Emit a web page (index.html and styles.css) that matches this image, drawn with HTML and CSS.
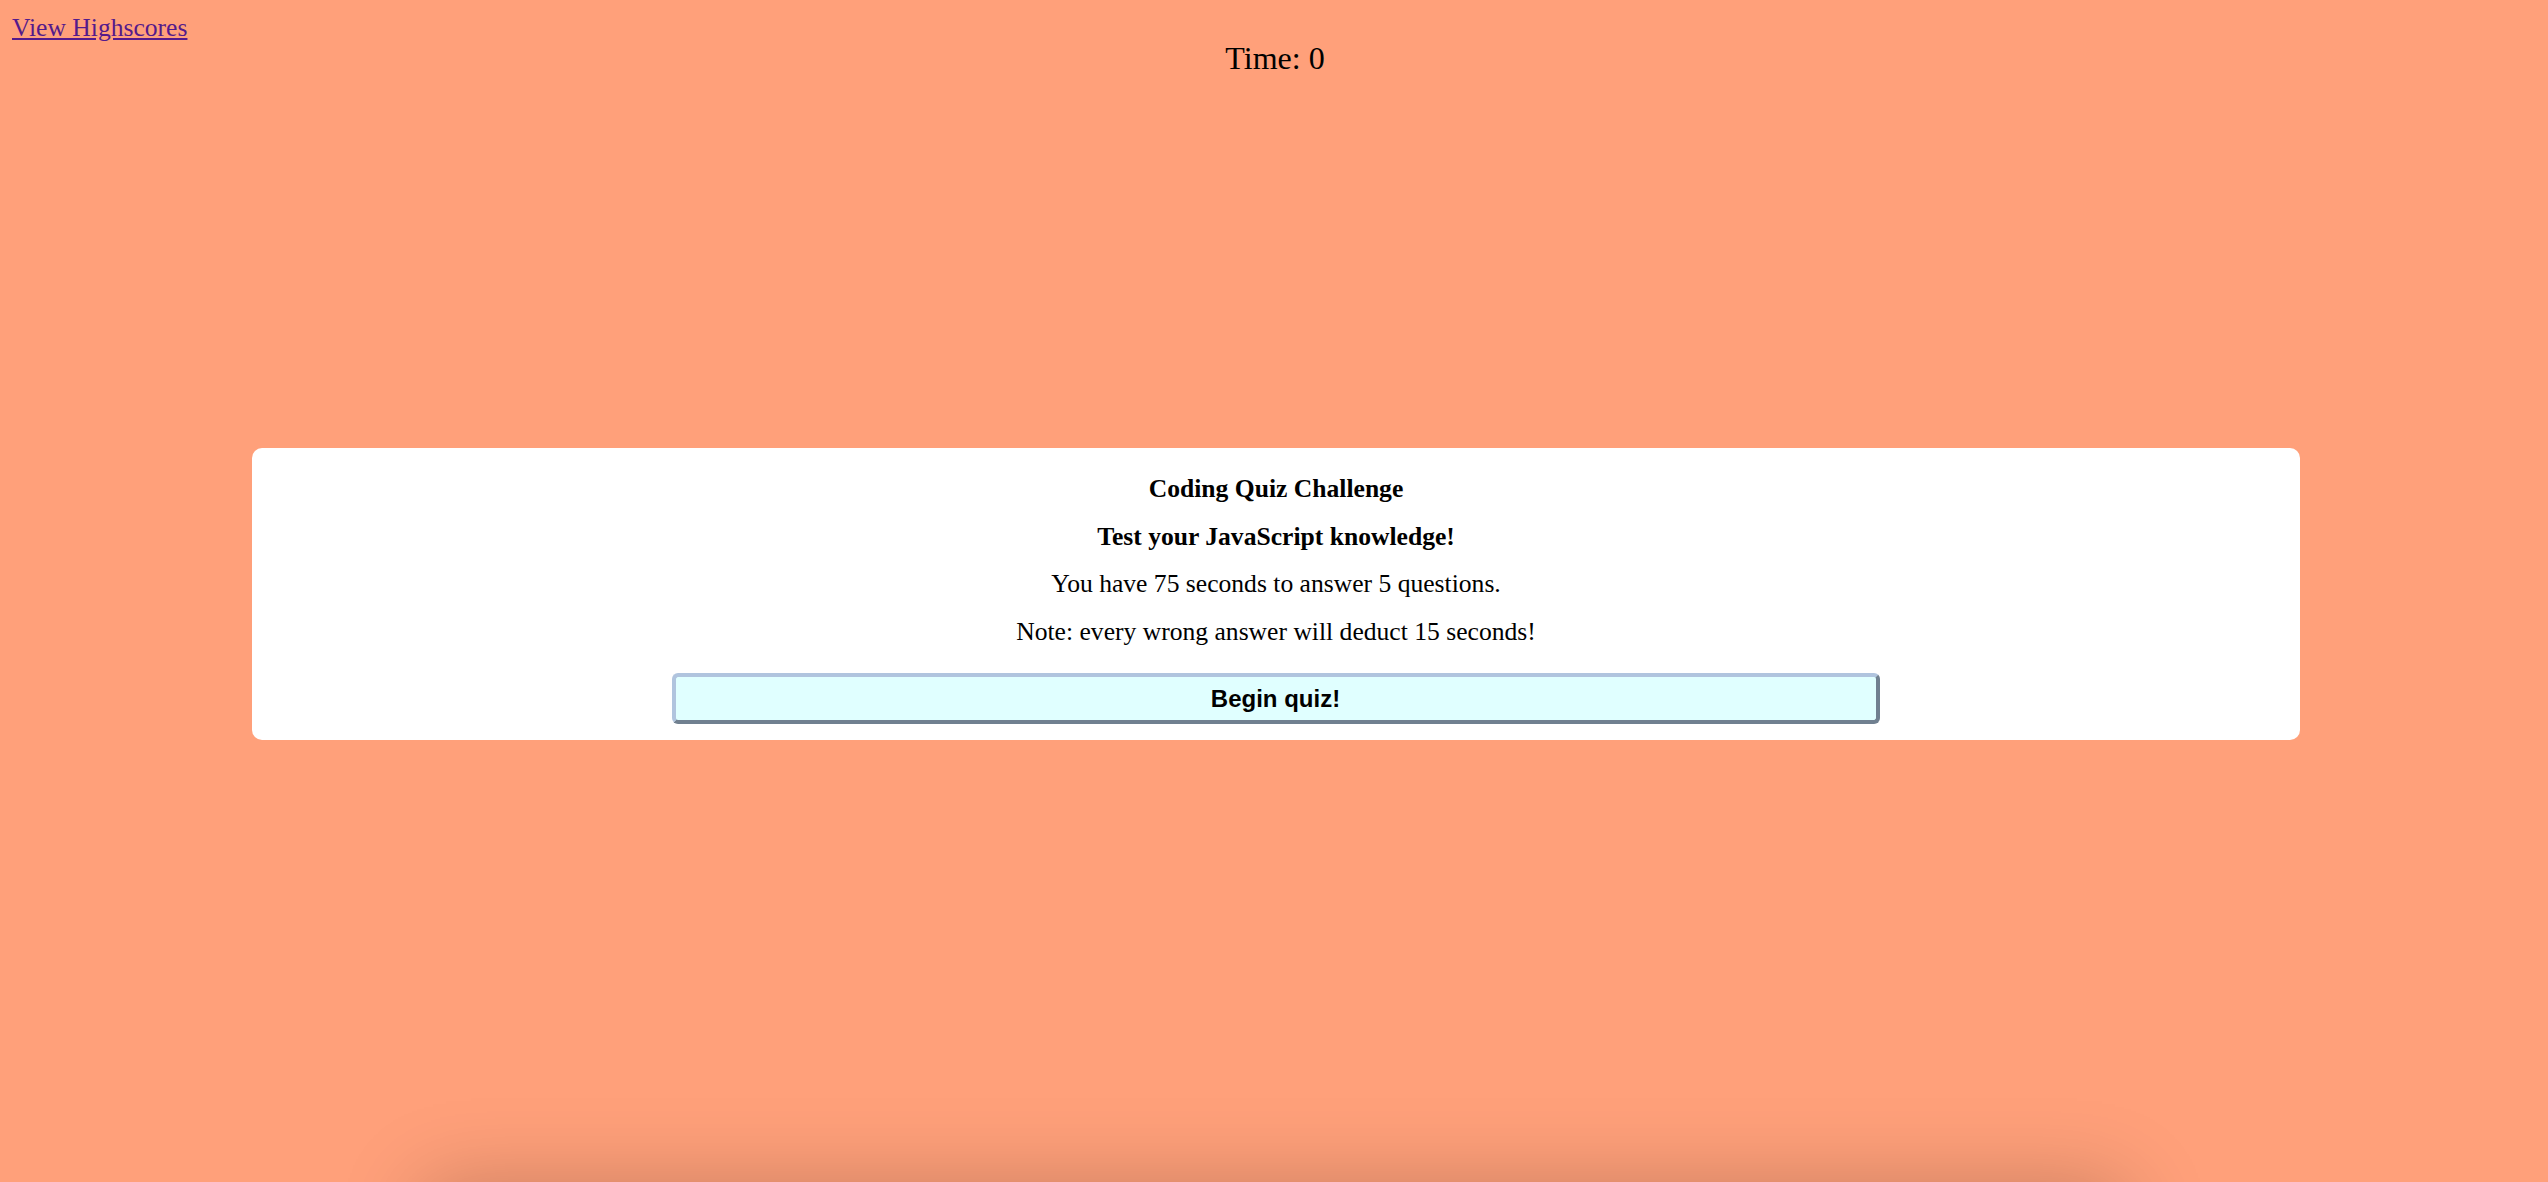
FILE: index.html
```html
<!DOCTYPE html>
<html lang="en">
<head>
<meta charset="utf-8">
<title>Coding Quiz Challenge</title>
<link rel="stylesheet" href="styles.css">
</head>
<body>
  <header class="top">
    <a class="scores-link" href="#highscores">View Highscores</a>
    <div class="timer">Time: <span>0</span></div>
  </header>
  <main class="stage">
    <section class="card">
      <div class="line bold">Coding Quiz Challenge</div>
      <div class="line bold">Test your JavaScript knowledge!</div>
      <div class="line">You have 75 seconds to answer 5 questions.</div>
      <div class="line">Note: every wrong answer will deduct 15 seconds!</div>
      <button class="begin" type="button">Begin quiz!</button>
    </section>
  </main>
  <section class="below" id="highscores"></section>
</body>
</html>
```

FILE: styles.css
```css
html, body {
  height: 100%;
  overflow: hidden;
}
body {
  margin: 0;
  padding: 13px 0 0 0;
  box-sizing: border-box;
  background: #ffa07a;
  font-family: "Liberation Serif", "Times New Roman", serif;
  font-size: 25.6px;
  color: #000;
}
.top {
  display: flex;
  flex-direction: column;
}
.scores-link {
  align-self: flex-start;
  margin-left: 12px;
  color: #551a8b;
  line-height: 29px;
}
.timer {
  text-align: center;
  font-size: 32px;
  line-height: 33px;
  padding-left: 2px;
}
.stage {
  padding: 373px 0 0 4px;
}
.card {
  width: 2048px;
  margin: 0 auto;
  box-sizing: border-box;
  background: #fff;
  border-radius: 10px;
  padding: 26px 0 15.5px;
  display: flex;
  flex-direction: column;
  align-items: center;
}
.line {
  line-height: 29px;
  margin-bottom: 18.6px;
}
.line:nth-of-type(4) {
  margin-bottom: 27.5px;
}
.bold {
  font-weight: bold;
}
.begin {
  width: 1208px;
  height: 51px;
  box-sizing: border-box;
  margin-right: 1px;
  padding: 0;
  background: #e0ffff;
  border: 4px solid;
  border-color: #b0c4de #708090 #708090 #b0c4de;
  border-radius: 6px;
  font-family: "Liberation Sans", Arial, sans-serif;
  font-weight: bold;
  font-size: 24px;
  color: #000;
}
.below {
  width: 1700px;
  height: 400px;
  margin: 445px auto 0;
  background: #ffa07a;
  box-shadow: 0 0 80px rgba(0, 0, 0, 0.22);
}
```
